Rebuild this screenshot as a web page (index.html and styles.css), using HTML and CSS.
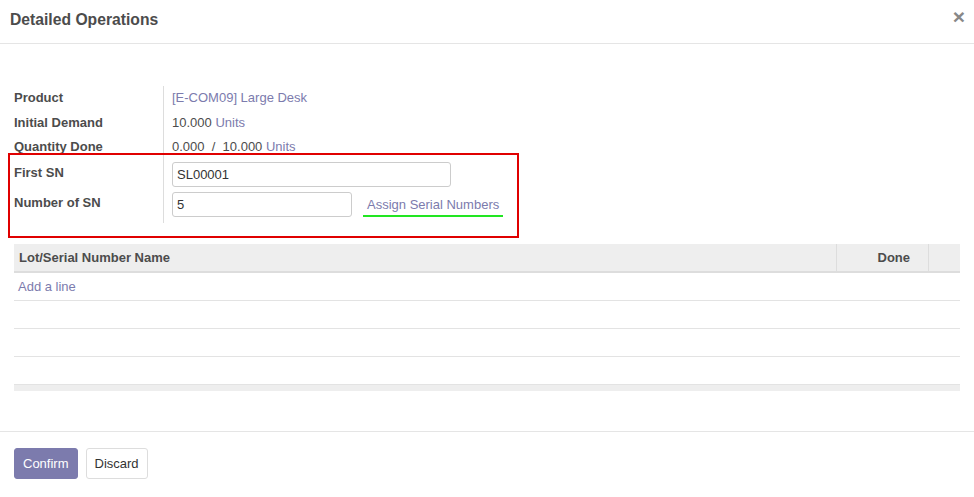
FILE: index.html
```html
<!DOCTYPE html>
<html lang="en">
<head>
    <meta charset="UTF-8">
    <title>Detailed Operations</title>
    <link rel="stylesheet" href="styles.css">
</head>
<body>
    <div class="modal">
        <header class="modal-header">
            <h4>Detailed Operations</h4>
            <span class="close">&times;</span>
        </header>

        <div class="modal-body">
            <div class="form-group">
                <div class="labels">
                    <div class="row">Product</div>
                    <div class="row">Initial Demand</div>
                    <div class="row">Quantity Done</div>
                    <div class="row sn">First SN</div>
                    <div class="row sn">Number of SN</div>
                </div>
                <div class="values">
                    <div class="row"><a class="link">[E-COM09] Large Desk</a></div>
                    <div class="row">10.000 <a class="link">Units</a></div>
                    <div class="row">0.000 &nbsp;/ &nbsp;10.000 <a class="link">Units</a></div>
                    <div class="row sn"><input class="field field-long" value="SL00001"></div>
                    <div class="row sn">
                        <input class="field field-short" value="5" autofocus>
                        <a class="assign">Assign Serial Numbers</a>
                    </div>
                </div>
                <div class="highlight"></div>
            </div>

            <table class="lines">
                <thead>
                    <tr>
                        <th class="col-name">Lot/Serial Number Name</th>
                        <th class="col-done">Done</th>
                        <th class="col-del"></th>
                    </tr>
                </thead>
                <tbody>
                    <tr><td colspan="3"><a class="link">Add a line</a></td></tr>
                    <tr><td colspan="3"></td></tr>
                    <tr><td colspan="3"></td></tr>
                    <tr><td colspan="3"></td></tr>
                </tbody>
                <tfoot>
                    <tr><td colspan="3"></td></tr>
                </tfoot>
            </table>
        </div>

        <footer class="modal-footer">
            <button class="btn btn-primary">Confirm</button>
            <button class="btn btn-default">Discard</button>
        </footer>
    </div>
</body>
</html>
```

FILE: styles.css
```css
body {
    margin: 0;
    font-family: 'Liberation Sans', Arial, sans-serif;
    font-size: 13px;
    color: #4c4c4c;
    background-color: #fff;
}

.modal {
    width: 974px;
}

.modal-header {
    display: flex;
    justify-content: space-between;
    align-items: center;
    height: 44px;
    padding: 0 10px;
    border-bottom: 1px solid #e5e5e5;
    box-sizing: border-box;
}

.modal-header h4 {
    margin: 0 0 4px;
    font-size: 15.7px;
    font-weight: bold;
    color: #4c4c4c;
}

.close {
    font-size: 21px;
    font-weight: bold;
    color: #888;
    margin: -10px -1px 0 0;
}

.modal-body {
    padding: 42px 14px 0;
    height: 345px;
}

.form-group {
    position: relative;
    display: flex;
}

.labels {
    width: 149px;
    font-weight: bold;
    border-right: 1px solid #ddd;
    padding-bottom: 3px;
}

.values {
    padding-left: 8px;
}

.row {
    height: 24.5px;
    line-height: 24px;
}

.labels .row.sn {
    height: 30px;
    line-height: 26px;
}

.values .row.sn {
    height: 30px;
    display: flex;
    align-items: center;
}

.link {
    color: #7c7bad;
    text-decoration: none;
}

.field {
    height: 25px;
    border: 1px solid #ccc;
    border-radius: 3px;
    padding: 0 4px;
    font-family: inherit;
    font-size: 13px;
    color: #333;
    box-sizing: border-box;
    outline: none;
    caret-color: #000;
}

.field-long {
    width: 279px;
}

.field-short {
    width: 180px;
}

.assign {
    color: #7c7bad;
    margin-left: 11px;
    margin-top: 4px;
    padding: 0 4px 2px;
    border-bottom: 2px solid #22e622;
    line-height: 16px;
}

.highlight {
    position: absolute;
    left: -6px;
    top: 67px;
    width: 507px;
    height: 81px;
    border: 2px solid #e00000;
    pointer-events: none;
}

.lines {
    width: 946px;
    margin-top: 21px;
    border-collapse: collapse;
}

.lines th {
    height: 27px;
    background-color: #eee;
    border-bottom: 2px solid #ddd;
    font-weight: bold;
    text-align: left;
    padding: 0 5px;
}

.lines th + th {
    border-left: 1px solid #ddd;
}

.lines .col-done {
    width: 68px;
    text-align: right;
    padding-right: 18px;
}

.lines .col-del {
    width: 21px;
}

.lines td {
    height: 27px;
    border-bottom: 1px solid #e3e3e3;
    padding: 0 4px;
}

.lines tfoot td {
    height: 6px;
    background-color: #eee;
    border-top: 1px solid #ddd;
    border-bottom: none;
    padding: 0;
}

.modal-footer {
    border-top: 1px solid #e5e5e5;
    padding: 16px 14px;
    display: flex;
    gap: 8px;
}

.btn {
    height: 31px;
    padding: 0 8px;
    font-family: inherit;
    font-size: 13px;
    border-radius: 3px;
    cursor: pointer;
}

.btn-primary {
    background-color: #7c7bad;
    color: #fff;
    border: 1px solid #7c7bad;
}

.btn-default {
    background-color: #fff;
    color: #333;
    border: 1px solid #ddd;
}
```
